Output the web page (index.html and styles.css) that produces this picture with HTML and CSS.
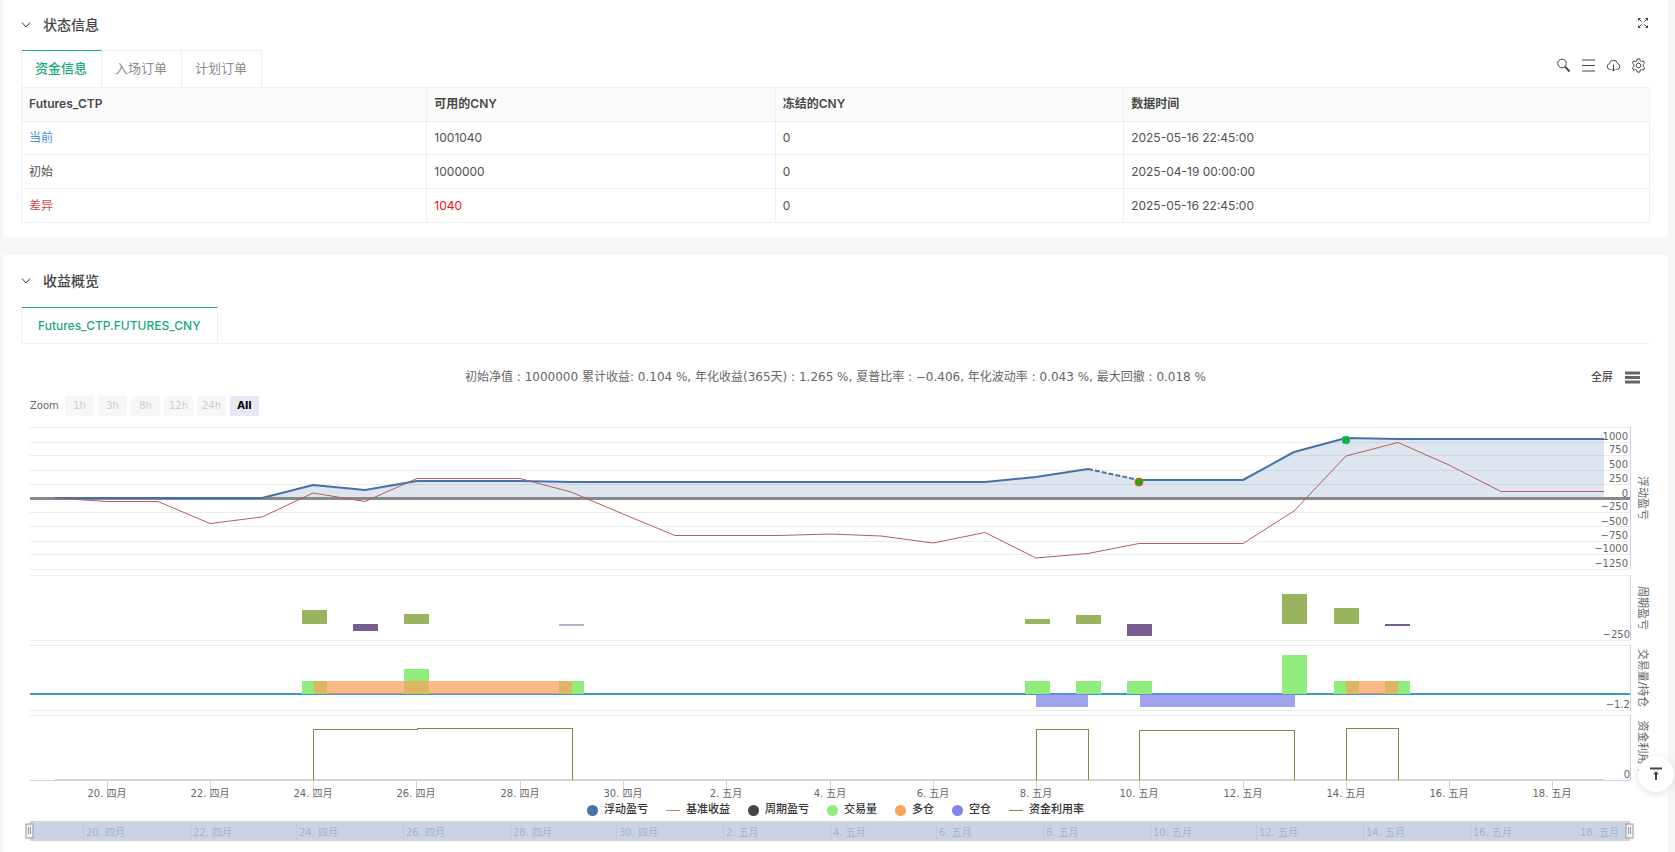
FILE: index.html
```html
<!DOCTYPE html>
<html lang="zh-CN">
<head>
<meta charset="utf-8">
<title>状态信息</title>
<link rel="stylesheet" href="styles.css">
</head>
<body>
<main class="page">
  <section class="card status">
    <header class="card-head">
      <button class="icon-btn fold" type="button" aria-label="收起"><svg width="10" height="8" viewBox="0 0 10 8"><path d="M1 1.500l4 4.500 4-4.500"/></svg></button>
      <h2>状态信息</h2>
      <button class="icon-btn expand" type="button" aria-label="全屏"><svg width="12" height="12" viewBox="0 0 12 12"><path class="tips" d="M1 1h3L1 4zM11 1v3L8 1zM1 11V8l3 3zM11 11H8l3-3z"/><path d="M2 2l2.700 2.700M10 2L7.300 4.700M2 10l2.700-2.700M10 10L7.300 7.300"/></svg></button>
    </header>
    <div class="tab-row">
      <nav class="tabs">
        <button class="tab active" type="button">资金信息</button>
        <button class="tab" type="button">入场订单</button>
        <button class="tab" type="button">计划订单</button>
      </nav>
      <div class="tools">
        <button class="icon-btn" type="button" aria-label="搜索"><svg width="15" height="15" viewBox="0 0 15 15"><circle cx="6" cy="5.500" r="4.300"/><path class="thick" d="M9 8.600l4.500 4.900"/></svg></button>
        <button class="icon-btn" type="button" aria-label="列表"><svg width="15" height="15" viewBox="0 0 15 15"><path d="M1 2h13M1 7.500h13M1 13h13"/></svg></button>
        <button class="icon-btn" type="button" aria-label="下载"><svg width="15" height="15" viewBox="0 0 15 15"><path d="M4.500 11.500H3.800A3 3 0 0 1 3.300 5.700 4.300 4.300 0 0 1 11.700 5.700 3 3 0 0 1 11.200 11.500h-.7M7.500 6.500v6.500M5.700 11.200l1.800 1.900 1.800-1.900"/></svg></button>
        <button class="icon-btn" type="button" aria-label="设置"><svg width="15" height="15" viewBox="0 0 15 15"><path d="M6.200.9h2.600l.4 1.900 1.300.7 1.800-.6 1.300 2.200-1.400 1.300v2.200l1.400 1.300-1.300 2.200-1.800-.6-1.300.7-.4 1.900H6.200l-.4-1.900-1.300-.7-1.800.6-1.300-2.200 1.400-1.300V6.400L1.400 5.100l1.300-2.200 1.800.6 1.300-.7z"/><circle cx="7.500" cy="7.500" r="2.300"/></svg></button>
      </div>
    </div>
    <table class="funds">
      <colgroup><col class="c1"><col class="c2"><col class="c3"><col class="c4"></colgroup>
      <thead><tr><th>Futures_CTP</th><th>可用的CNY</th><th>冻结的CNY</th><th>数据时间</th></tr></thead>
      <tbody>
        <tr class="now"><td class="blue">当前</td><td>1001040</td><td>0</td><td>2025-05-16 22:45:00</td></tr>
        <tr><td>初始</td><td>1000000</td><td>0</td><td>2025-04-19 00:00:00</td></tr>
        <tr><td class="brick">差异</td><td class="red">1040</td><td>0</td><td>2025-05-16 22:45:00</td></tr>
      </tbody>
    </table>
  </section>

  <section class="card profit">
    <header class="card-head">
      <button class="icon-btn fold" type="button" aria-label="收起"><svg width="10" height="8" viewBox="0 0 10 8"><path d="M1 1.500l4 4.500 4-4.500"/></svg></button>
      <h2>收益概览</h2>
    </header>
    <div class="tab-row lined">
      <nav class="tabs"><button class="tab active" type="button">Futures_CTP.FUTURES_CNY</button></nav>
    </div>
    <div class="chart">
      <div class="chart-head">
        <span></span>
        <h3>初始净值 : 1000000 累计收益: 0.104 %, 年化收益(365天) : 1.265 %, 夏普比率 : −0.406, 年化波动率 : 0.043 %, 最大回撤 : 0.018 %</h3>
        <div class="chart-tools">
          <button class="text-btn" type="button">全屏</button>
          <button class="icon-btn" type="button" aria-label="图表菜单"><svg class="burger" width="16" height="13" viewBox="0 0 16 13"><path d="M1 2h15M1 6.500h15M1 11h15"/></svg></button>
        </div>
      </div>
      <div class="ranges">
        <span>Zoom</span>
        <button type="button" disabled>1h</button>
        <button type="button" disabled>3h</button>
        <button type="button" disabled>8h</button>
        <button type="button" disabled>12h</button>
        <button type="button" disabled>24h</button>
        <button type="button" class="on">All</button>
      </div>
      <svg class="plot" viewBox="21 420 1629 383" role="img" aria-label="收益曲线">
        <g class="grid">
          <path d="M30 427H1630M30 442H1630M30 455H1630M30 470H1630M30 484H1630M30 512H1630M30 526H1630M30 541H1630M30 554H1630M30 569H1630"/>
          <path d="M30 575H1630M30 640H1630M30 645H1630M30 710H1630M30 715H1630"/>
        </g>
        <path class="axis" d="M1630 427V569M1630 575V640M1630 645V710M1630 715V780M30 780H1630"/>
        <path class="axis" d="M107 780v9M210 780v9M313 780v9M416 780v9M520 780v9M623 780v9M726 780v9M830 780v9M933 780v9M1036 780v9M1139 780v9M1243 780v9M1346 780v9M1449 780v9M1552 780v9"/>

        <path class="area" d="M55 498H262L313 485 365 490 417 481 520 481 571 482H985L1036 477 1088 469 1139 480H1243L1294 452 1346 438 1398 439H1604V498z"/>
        <path class="zero" d="M30 498.500H1630"/>
        <path class="float" d="M55 498H262L313 485 365 490 417 481 520 481 571 482H985L1036 477 1088 469"/>
        <path class="float dash" d="M1088 469L1139 480"/>
        <path class="float" d="M1139 480H1243L1294 452 1346 438 1398 439H1604"/>
        <path class="base" d="M55 498L107 501.500H158L210 523.500 262 517 313 493 365 501.500 417 478.500H520L571 492 623 514 675 535.500H778L830 534 881 536 933 543 985 532.500 1036 558 1088 553.500 1139 543.500H1243L1294 511 1346 456 1398 442.500 1449 465 1501 491.500H1604"/>
        <g class="marks">
          <circle class="m-red" cx="1139" cy="482" r="4"/><path class="m-red" d="M1139 479v6"/>
          <circle class="m-blue" cx="1346" cy="440" r="4"/><path class="m-blue" d="M1346 437v6"/>
        </g>

        <g class="gain">
          <rect x="302" y="610" width="25" height="14"/><rect x="404" y="614" width="25" height="10"/>
          <rect x="1025" y="619" width="25" height="5"/><rect x="1076" y="615" width="25" height="9"/>
          <rect x="1282" y="594" width="25" height="30"/><rect x="1334" y="608" width="25" height="16"/>
        </g>
        <g class="loss">
          <rect x="353" y="624" width="25" height="7"/><rect class="faint" x="559" y="624" width="25" height="2"/>
          <rect x="1127" y="624" width="25" height="12"/><rect x="1385" y="624" width="25" height="2"/>
        </g>

        <path class="hold" d="M30 694H1630"/>
        <g class="volume">
          <rect x="302" y="681" width="25" height="13"/><rect x="404" y="669" width="25" height="25"/><rect x="559" y="681" width="25" height="13"/>
          <rect x="1025" y="681" width="25" height="13"/><rect x="1076" y="681" width="25" height="13"/><rect x="1127" y="681" width="25" height="13"/>
          <rect x="1282" y="655" width="25" height="39"/><rect x="1334" y="681" width="25" height="13"/><rect x="1385" y="681" width="25" height="13"/>
        </g>
        <g class="long"><rect x="314" y="681" width="258" height="13"/><rect x="1346" y="681" width="52" height="13"/></g>
        <g class="short"><rect x="1036" y="694" width="52" height="13"/><rect x="1140" y="694" width="155" height="13"/></g>

        <path class="usage-zero" d="M55 779H1604"/>
        <path class="usage" d="M313 780V729H417V728H572V780M1036 780V729H1088V780M1139 780V730H1294V780M1346 780V728H1398V780"/>

        <g class="ylab">
          <text x="1628" y="440">1000</text><text x="1628" y="453">750</text><text x="1628" y="468">500</text><text x="1628" y="482">250</text><text x="1628" y="497">0</text>
          <text x="1628" y="510">−250</text><text x="1628" y="525">−500</text><text x="1628" y="539">−750</text><text x="1628" y="552">−1000</text><text x="1628" y="567">−1250</text>
          <text x="1630" y="638">−250</text><text x="1630" y="708">−1.2</text><text x="1630" y="778">0</text>
        </g>
        <g class="ytitle">
          <text transform="translate(1639 498) rotate(90)">浮动盈亏</text>
          <text transform="translate(1639 608) rotate(90)">周期盈亏</text>
          <text transform="translate(1639 678) rotate(90)">交易量/持仓</text>
          <text transform="translate(1639 748) rotate(90)">资金利用率</text>
        </g>
        <g class="xlab">
          <text x="107" y="797">20. 四月</text><text x="210" y="797">22. 四月</text><text x="313" y="797">24. 四月</text><text x="416" y="797">26. 四月</text><text x="520" y="797">28. 四月</text>
          <text x="623" y="797">30. 四月</text><text x="726" y="797">2. 五月</text><text x="830" y="797">4. 五月</text><text x="933" y="797">6. 五月</text><text x="1036" y="797">8. 五月</text>
          <text x="1139" y="797">10. 五月</text><text x="1243" y="797">12. 五月</text><text x="1346" y="797">14. 五月</text><text x="1449" y="797">16. 五月</text><text x="1552" y="797">18. 五月</text>
        </g>
      </svg>
      <ul class="legend">
        <li><i class="dot d-float"></i>浮动盈亏</li>
        <li><i class="dash-key k-base"></i>基准收益</li>
        <li><i class="dot d-period"></i>周期盈亏</li>
        <li><i class="dot d-volume"></i>交易量</li>
        <li><i class="dot d-long"></i>多仓</li>
        <li><i class="dot d-short"></i>空仓</li>
        <li><i class="dash-key k-usage"></i>资金利用率</li>
      </ul>
      <svg class="navigator" viewBox="21 818 1629 26" role="img" aria-label="时间范围">
        <rect class="nav-mask" x="30" y="822" width="1600" height="18"/>
        <path class="nav-edge" d="M30 822H1630M30 840H1630"/>
        <path class="nav-grid" d="M83 823v17M190 823v17M296 823v17M403 823v17M510 823v17M616 823v17M723 823v17M830 823v17M936 823v17M1043 823v17M1150 823v17M1256 823v17M1363 823v17M1470 823v17M1577 823v17"/>
        <g class="nav-lab">
          <text x="86" y="836">20. 四月</text><text x="193" y="836">22. 四月</text><text x="299" y="836">24. 四月</text><text x="406" y="836">26. 四月</text><text x="513" y="836">28. 四月</text>
          <text x="619" y="836">30. 四月</text><text x="726" y="836">2. 五月</text><text x="833" y="836">4. 五月</text><text x="939" y="836">6. 五月</text><text x="1046" y="836">8. 五月</text>
          <text x="1153" y="836">10. 五月</text><text x="1259" y="836">12. 五月</text><text x="1366" y="836">14. 五月</text><text x="1473" y="836">16. 五月</text><text x="1580" y="836">18. 五月</text>
        </g>
        <g class="handle">
          <rect x="26" y="824" width="7" height="14"/><path d="M28.500 827v7M30.500 827v7"/>
          <rect x="1626" y="824" width="7" height="14"/><path d="M1628.500 827v7M1630.500 827v7"/>
        </g>
      </svg>
    </div>
  </section>
</main>
<button class="to-top" type="button" aria-label="回到顶部"><svg width="14" height="14" viewBox="0 0 14 14"><path d="M1 1.500h12M7 13V5"/><path class="head" d="M4.300 7.500L7 4l2.700 3.500z"/></svg></button>
</body>
</html>
```
FILE: styles.css
```css
* { box-sizing: border-box; }
body {
  margin: 0;
  background: #f5f6f8;
  color: #505050;
  font: 12px/18px Inter, "Noto Sans CJK SC", sans-serif;
}
button { font: inherit; color: inherit; border: 0; background: none; padding: 0; margin: 0; }
.page { display: flex; flex-direction: column; gap: 18px; margin: 0 7px 0 3px; height: 100vh; overflow: hidden; }
.card { background: #fff; padding: 0 18px; flex: none; }
.status { padding-bottom: 14px; }
.profit { flex: 1 0 auto; }

.card-head { display: flex; align-items: center; height: 50px; gap: 12px; }
.profit .card-head { height: 52px; }
.card-head h2 { margin: 0; font-size: 14px; line-height: 20px; font-weight: 500; color: #444; flex: 1; }
.icon-btn { display: flex; }
.icon-btn svg { fill: none; stroke: #444; stroke-width: 1; }
.icon-btn .thick { stroke-width: 2; }
.icon-btn .tips { fill: #444; stroke: none; }
.icon-btn .burger { stroke: #666; stroke-width: 3; }
.expand { padding: 0 1px 4px 0; }

.tab-row { display: flex; justify-content: space-between; align-items: stretch; }
.lined { border-bottom: 1px solid #efefef; }
.tabs { display: flex; border-left: 1px solid #efefef; }
.tab {
  height: 37px;
  padding: 0 14px 2px 13px;
  border-top: 1px solid #efefef;
  border-right: 1px solid #efefef;
  font-size: 13px;
  color: #8c8c8c;
}
.tab.active { border-top-color: #18a979; color: #18a979; font-weight: 500; }
.lined .tab.active { height: 36px; font-size: 12px; padding: 0 16px; }
.tools { display: flex; align-items: center; gap: 10px; padding: 0 4px 7px 0; }

.funds { width: 100%; border-collapse: collapse; table-layout: fixed; }
.funds th, .funds td { height: 34px; padding: 0 7px; border: 1px solid #efefef; text-align: left; }
.funds th { background: #fbfbfb; color: #484848; font-weight: 600; padding-bottom: 1px; }
.funds .now td { height: 33px; }
.c1 { width: 24.9%; } .c2, .c3 { width: 21.4%; }
.blue { color: #4a90e2; }
.brick { color: #cf4b42; }
.funds .red { color: #f01010; }

.chart { padding-top: 22px; font-family: "DejaVu Sans", "Noto Sans CJK SC", sans-serif; }
.chart-head { display: grid; grid-template-columns: 1fr auto 1fr; align-items: center; }
.chart-head h3 { margin: 0; font-size: 12px; line-height: 22px; font-weight: 400; color: #666; }
.chart-tools { display: flex; justify-content: flex-end; align-items: center; gap: 11px; padding-right: 10px; }
.text-btn { font-size: 11px; color: #333; padding-top: 2px; }
.ranges { display: flex; align-items: center; gap: 4px; padding: 8px 0 4px 9px; font-size: 10px; color: #666; }
.ranges span { width: 31px; }
.ranges button { width: 29px; height: 20px; border-radius: 2px; background: #f7f7f7; color: #ccc; }
.ranges .on { background: #e6e9f5; color: #000; font-weight: 700; }

.plot, .navigator { display: block; width: 100%; height: auto; }
.plot path { fill: none; }
.plot .grid, .plot .axis, .plot .usage, .usage-zero { shape-rendering: crispEdges; }
.grid { stroke: #ececec; }
.axis { stroke: #ccd6eb; }
.plot .area { fill: #4572a7; fill-opacity: .18; }
.zero { stroke: #858a8f; stroke-width: 3; }
.float { stroke: #4572a7; stroke-width: 2; stroke-linejoin: round; }
.dash { stroke-dasharray: 5 2; }
.base { stroke: #b85c5c; stroke-width: 1; }
.marks circle { fill: #00b800; }
.m-red { stroke: #e8582c; }
.m-blue { stroke: #3cb0c8; }
.gain { fill: #99b55f; }
.loss { fill: #765e90; }
.faint { opacity: .5; }
.hold { stroke: #3a9bc4; stroke-width: 2; }
.volume { fill: #90ed7d; }
.long { fill: #f7a35c; fill-opacity: .75; }
.short { fill: #8085e9; fill-opacity: .75; }
.usage-zero { stroke: #d8d5bf; }
.usage { stroke: #8d8246; }
.ylab, .xlab, .nav-lab { font-size: 10px; fill: #666; }
.ylab { text-anchor: end; }
.xlab, .ytitle { text-anchor: middle; }
.ytitle { font-size: 11px; fill: #666; }

.legend { display: flex; justify-content: center; gap: 18px; margin: 0; padding: 0 0 1px; list-style: none; font-size: 11px; line-height: 14px; font-weight: 500; color: #333; }
.legend li { display: flex; align-items: center; gap: 6px; }
.dot { width: 11px; height: 11px; border-radius: 50%; }
.dash-key { width: 14px; height: 1px; }
.d-float { background: #4572a7; } .d-period { background: #434348; } .d-volume { background: #90ed7d; }
.d-long { background: #f7a35c; } .d-short { background: #8085e9; }
.k-base { background: #d08080; } .k-usage { background: #8d8246; }

.nav-mask { fill: #c8d4e5; }
.nav-edge { stroke: #d2d4d6; stroke-width: 2; }
.nav-grid { stroke: #bccada; shape-rendering: crispEdges; }
.navigator .nav-lab { fill: #a4b2c6; }
.handle { fill: #f2f2f2; stroke: #999; }

.to-top {
  position: fixed;
  right: 1px;
  bottom: 60px;
  width: 36px;
  height: 36px;
  border-radius: 50%;
  background: #fff;
  box-shadow: 0 2px 8px rgba(0, 0, 0, .12);
  display: flex;
  align-items: center;
  justify-content: center;
}
.to-top svg { fill: none; stroke: #444; stroke-width: 2; }
.to-top .head { fill: #444; stroke: none; }
```
